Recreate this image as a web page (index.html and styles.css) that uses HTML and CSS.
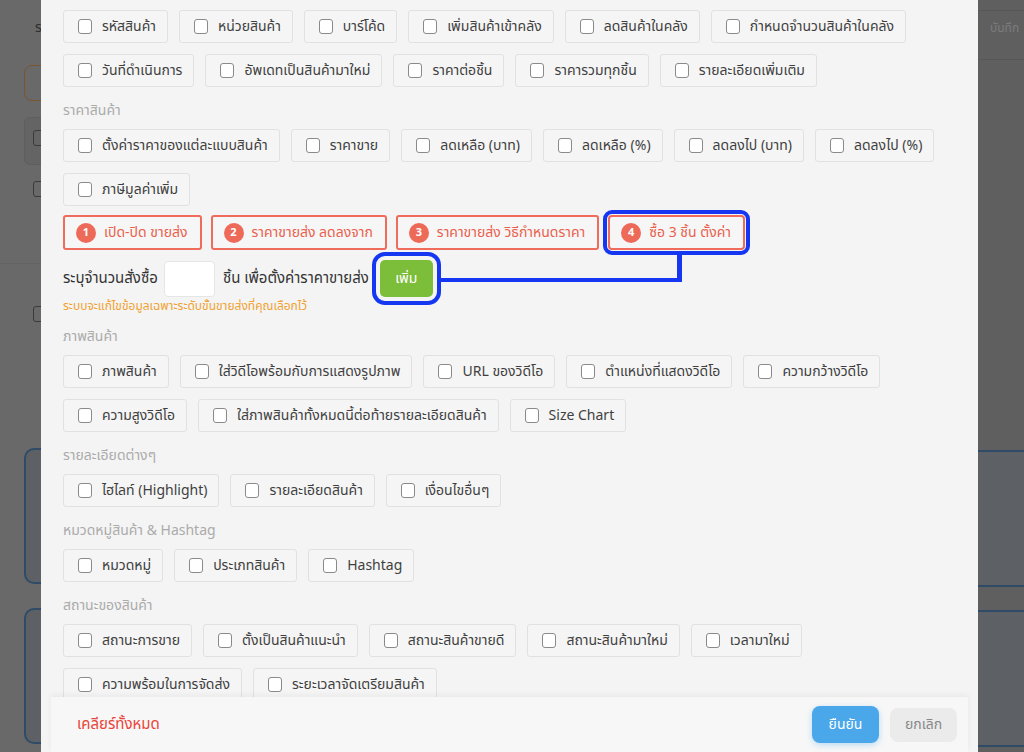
FILE: index.html
```html
<!DOCTYPE html>
<html lang="th">
<head>
<meta charset="utf-8">
<title>ตั้งค่าการแก้ไขสินค้า</title>
<link rel="stylesheet" href="styles.css">
</head>
<body>
<div class="page">
  <div class="bg-left">
    <div class="bg-letter">ร</div>
    <div class="bg-orange"></div>
    <div class="bg-box"><span class="bg-cb"></span></div>
    <div class="bg-row"><span class="bg-cb"></span></div>
    <div class="bg-line"></div>
    <div class="bg-row2"><span class="bg-cb"></span></div>
    <div class="bg-card"></div>
    <div class="bg-card"></div>
  </div>
  <div class="bg-right">
    <div class="bg-r-line"></div>
    <div class="bg-save">บันทึก</div>
    <div class="bg-r-line"></div>
    <div class="bg-r-card"></div>
    <div class="bg-r-card"></div>
  </div>
</div>

<div class="modal">
  <div class="modal-body">
    <div class="sec-title">ข้อมูลสินค้า</div>
    <div class="chips">
      <label class="chip"><span class="cb"></span>รหัสสินค้า</label>
      <label class="chip"><span class="cb"></span>หน่วยสินค้า</label>
      <label class="chip"><span class="cb"></span>บาร์โค้ด</label>
      <label class="chip"><span class="cb"></span>เพิ่มสินค้าเข้าคลัง</label>
      <label class="chip"><span class="cb"></span>ลดสินค้าในคลัง</label>
      <label class="chip"><span class="cb"></span>กำหนดจำนวนสินค้าในคลัง</label>
      <label class="chip"><span class="cb"></span>วันที่ดำเนินการ</label>
      <label class="chip"><span class="cb"></span>อัพเดทเป็นสินค้ามาใหม่</label>
      <label class="chip"><span class="cb"></span>ราคาต่อชิ้น</label>
      <label class="chip"><span class="cb"></span>ราคารวมทุกชิ้น</label>
      <label class="chip"><span class="cb"></span>รายละเอียดเพิ่มเติม</label>
    </div>

    <div class="sec-title">ราคาสินค้า</div>
    <div class="chips">
      <label class="chip"><span class="cb"></span>ตั้งค่าราคาของแต่ละแบบสินค้า</label>
      <label class="chip"><span class="cb"></span>ราคาขาย</label>
      <label class="chip"><span class="cb"></span>ลดเหลือ (บาท)</label>
      <label class="chip"><span class="cb"></span>ลดเหลือ (%)</label>
      <label class="chip"><span class="cb"></span>ลดลงไป (บาท)</label>
      <label class="chip"><span class="cb"></span>ลดลงไป (%)</label>
      <label class="chip"><span class="cb"></span>ภาษีมูลค่าเพิ่ม</label>
    </div>

    <div class="wholesale">
      <div class="steps">
        <span class="step"><span class="num">1</span>เปิด-ปิด ขายส่ง</span>
        <span class="step"><span class="num">2</span>ราคาขายส่ง ลดลงจาก</span>
        <span class="step"><span class="num">3</span>ราคาขายส่ง วิธีกำหนดราคา</span>
        <span class="step step-hl"><span class="num">4</span>ซื้อ 3 ชิ้น ตั้งค่า</span>
      </div>
      <div class="qty-row">
        <span>ระบุจำนวนสั่งซื้อ</span>
        <span class="qty-input"></span>
        <span>ชิ้น เพื่อตั้งค่าราคาขายส่ง</span>
        <button class="add-btn">เพิ่ม</button>
        <span class="connector"></span>
      </div>
      <div class="note">ระบบจะแก้ไขข้อมูลเฉพาะระดับขั้นขายส่งที่คุณเลือกไว้</div>
    </div>

    <div class="sec-title">ภาพสินค้า</div>
    <div class="chips">
      <label class="chip"><span class="cb"></span>ภาพสินค้า</label>
      <label class="chip"><span class="cb"></span>ใส่วิดีโอพร้อมกับการแสดงรูปภาพ</label>
      <label class="chip"><span class="cb"></span>URL ของวิดีโอ</label>
      <label class="chip"><span class="cb"></span>ตำแหน่งที่แสดงวิดีโอ</label>
      <label class="chip"><span class="cb"></span>ความกว้างวิดีโอ</label>
      <label class="chip"><span class="cb"></span>ความสูงวิดีโอ</label>
      <label class="chip"><span class="cb"></span>ใส่ภาพสินค้าทั้งหมดนี้ต่อท้ายรายละเอียดสินค้า</label>
      <label class="chip"><span class="cb"></span>Size Chart</label>
    </div>

    <div class="sec-title">รายละเอียดต่างๆ</div>
    <div class="chips">
      <label class="chip"><span class="cb"></span>ไฮไลท์ (Highlight)</label>
      <label class="chip"><span class="cb"></span>รายละเอียดสินค้า</label>
      <label class="chip"><span class="cb"></span>เงื่อนไขอื่นๆ</label>
    </div>

    <div class="sec-title">หมวดหมู่สินค้า &amp; Hashtag</div>
    <div class="chips">
      <label class="chip"><span class="cb"></span>หมวดหมู่</label>
      <label class="chip"><span class="cb"></span>ประเภทสินค้า</label>
      <label class="chip"><span class="cb"></span>Hashtag</label>
    </div>

    <div class="sec-title">สถานะของสินค้า</div>
    <div class="chips">
      <label class="chip"><span class="cb"></span>สถานะการขาย</label>
      <label class="chip"><span class="cb"></span>ตั้งเป็นสินค้าแนะนำ</label>
      <label class="chip"><span class="cb"></span>สถานะสินค้าขายดี</label>
      <label class="chip"><span class="cb"></span>สถานะสินค้ามาใหม่</label>
      <label class="chip"><span class="cb"></span>เวลามาใหม่</label>
      <label class="chip"><span class="cb"></span>ความพร้อมในการจัดส่ง</label>
      <label class="chip"><span class="cb"></span>ระยะเวลาจัดเตรียมสินค้า</label>
    </div>
  </div>
  <div class="modal-footer">
    <a class="clear-all">เคลียร์ทั้งหมด</a>
    <div class="actions">
      <button class="btn-confirm">ยืนยัน</button>
      <button class="btn-cancel">ยกเลิก</button>
    </div>
  </div>
</div>
</body>
</html>
```
FILE: styles.css
```css
* { box-sizing: border-box; }
html, body {
  margin: 0;
  padding: 0;
  width: 1024px;
  height: 752px;
  overflow: hidden;
  font-family: "Noto Sans Thai", "Noto Sans", "DejaVu Sans", sans-serif;
}

/* dimmed page behind the modal */
.page {
  display: flex;
  justify-content: space-between;
  width: 1024px;
  height: 752px;
  background: #696969;
}
.bg-left {
  width: 41px;
  padding: 12px 0 0 24px;
  display: flex;
  flex-direction: column;
  overflow: hidden;
}
.bg-letter { color: #2e2e2e; font-size: 14px; margin-left: 11px; height: 30px; padding-top: 5px; }
.bg-orange {
  flex: none;
  height: 36px;
  width: 60px;
  border: 1.5px solid #7a5530;
  border-radius: 8px;
  margin-top: 23px;
}
.bg-box {
  flex: none;
  margin-top: 16px;
  height: 48px;
  width: 60px;
  background: #646464;
  border: 1px solid #5e5e5e;
  border-radius: 6px;
  padding: 12px 0 0 8px;
}
.bg-cb {
  display: block;
  width: 14px;
  height: 16px;
  border: 1.5px solid #3a3a3a;
  border-radius: 3px;
}
.bg-row { flex: none; margin-top: 16px; padding-left: 9px; height: 30px; }
.bg-line { flex: none; margin-top: 52px; height: 1px; background: #626262; margin-left: -24px; }
.bg-row2 { flex: none; margin-top: 42px; padding-left: 9px; height: 30px; }
.bg-card {
  flex: none;
  margin-top: 112px;
  height: 136px;
  width: 60px;
  border: 2px solid #2f4b68;
  border-radius: 10px;
  background: #5d6165;
}
.bg-card + .bg-card { margin-top: 24px; }

.bg-right {
  width: 46px;
  background: #5f5f5f;
  display: flex;
  flex-direction: column;
  overflow: hidden;
}
.bg-r-line { flex: none; height: 1px; background: #575757; margin-top: 10px; }
.bg-save { flex: none; color: #7c7c7c; font-size: 12px; margin: 8px 0 0 12px; white-space: nowrap; height: 30px; }
.bg-r-card {
  flex: none;
  height: 137px;
  border-top: 2px solid #2f4b68;
  border-bottom: 2px solid #2f4b68;
  background: #5d6165;
}
.bg-r-line + .bg-r-card { margin-top: 390px; }
.bg-r-card + .bg-r-card { margin-top: 23px; }

/* modal */
.modal {
  position: absolute;
  left: 41px;
  top: -40px;
  width: 937px;
  height: 792px;
  background: #f4f4f4;
  display: flex;
  flex-direction: column;
}
.modal-body {
  flex: 1;
  overflow: hidden;
  padding: 8px 22px 0 22px;
  color: #444;
}
.sec-title {
  margin: 14px 0 8px 0;
  line-height: 20px;
  height: 20px;
  font-size: 14px;
  color: #ababab;
}
.chips {
  display: flex;
  flex-wrap: wrap;
  gap: 11px 11px;
}
.chip {
  display: flex;
  align-items: center;
  height: 33px;
  padding: 0 11px 0 14px;
  border: 1px solid #e1e1e1;
  border-radius: 3px;
  background: #f5f5f5;
  font-size: 14px;
  line-height: 20px;
  color: #3f3f3f;
  white-space: nowrap;
}
.cb {
  width: 14px;
  height: 15px;
  margin-right: 10px;
  border: 1.3px solid #8a8a8a;
  border-radius: 3px;
  background: #fff;
  flex: none;
}

/* wholesale */
.wholesale {
  margin-top: 9px;
}
.steps {
  display: flex;
  gap: 9px;
}
.step {
  display: flex;
  align-items: center;
  height: 35px;
  padding: 0 12px 0 11px;
  border: 2px solid #ef6b5b;
  border-radius: 3px;
  background: #f6f6f6;
  color: #ea5f4d;
  font-size: 14px;
  line-height: 20px;
  white-space: nowrap;
}
.num {
  display: inline-flex;
  align-items: center;
  justify-content: center;
  width: 20px;
  height: 20px;
  margin-right: 8px;
  border-radius: 50%;
  background: #ed6a59;
  color: #fff;
  font-size: 11px;
  font-weight: bold;
}
.step-hl {
  outline: 4px solid #1537f2;
  outline-offset: 1px;
  border-radius: 4px;
}
.qty-row {
  display: flex;
  align-items: center;
  margin-top: 10px;
  font-size: 15px;
  line-height: 20px;
  color: #333;
  height: 37px;
}
.qty-input {
  width: 51px;
  height: 36px;
  margin: 0 8px 0 6px;
  background: #fff;
  border: 1px solid #e6e6e6;
  border-radius: 4px;
}
.add-btn {
  margin-left: 11px;
  width: 53px;
  height: 37px;
  border: none;
  border-radius: 5px;
  background: #7cbd3a;
  color: #fff;
  font-family: inherit;
  font-size: 14px;
  outline: 4px solid #1537f2;
  outline-offset: 4px;
}
.connector {
  position: relative;
  margin: 3px 0 0 8px;
  width: 241px;
  height: 4px;
  background: #1537f2;
}
.connector::after {
  content: "";
  position: absolute;
  right: 0;
  bottom: 0;
  width: 5px;
  height: 27px;
  background: #1537f2;
}
.note {
  margin-top: 2px;
  font-size: 12px;
  line-height: 14px;
  color: #f0a232;
}

/* footer */
.modal-footer {
  flex: none;
  height: 55px;
  margin: 0 10px;
  padding: 0 11px 0 26px;
  display: flex;
  align-items: center;
  justify-content: space-between;
  background: #f7f7f7;
  box-shadow: 0 -2px 6px rgba(0,0,0,0.05);
}
.clear-all {
  color: #e9443a;
  font-size: 15px;
}
.actions {
  display: flex;
  gap: 11px;
  align-items: center;
}
.btn-confirm {
  width: 67px;
  height: 37px;
  border: none;
  border-radius: 8px;
  background: #4aa7ea;
  color: #fff;
  font-family: inherit;
  font-size: 14px;
  box-shadow: 0 2px 6px rgba(74,167,234,0.35);
}
.btn-cancel {
  width: 67px;
  height: 34px;
  border: none;
  border-radius: 8px;
  background: #ebebeb;
  color: #888;
  font-family: inherit;
  font-size: 14px;
}
```
